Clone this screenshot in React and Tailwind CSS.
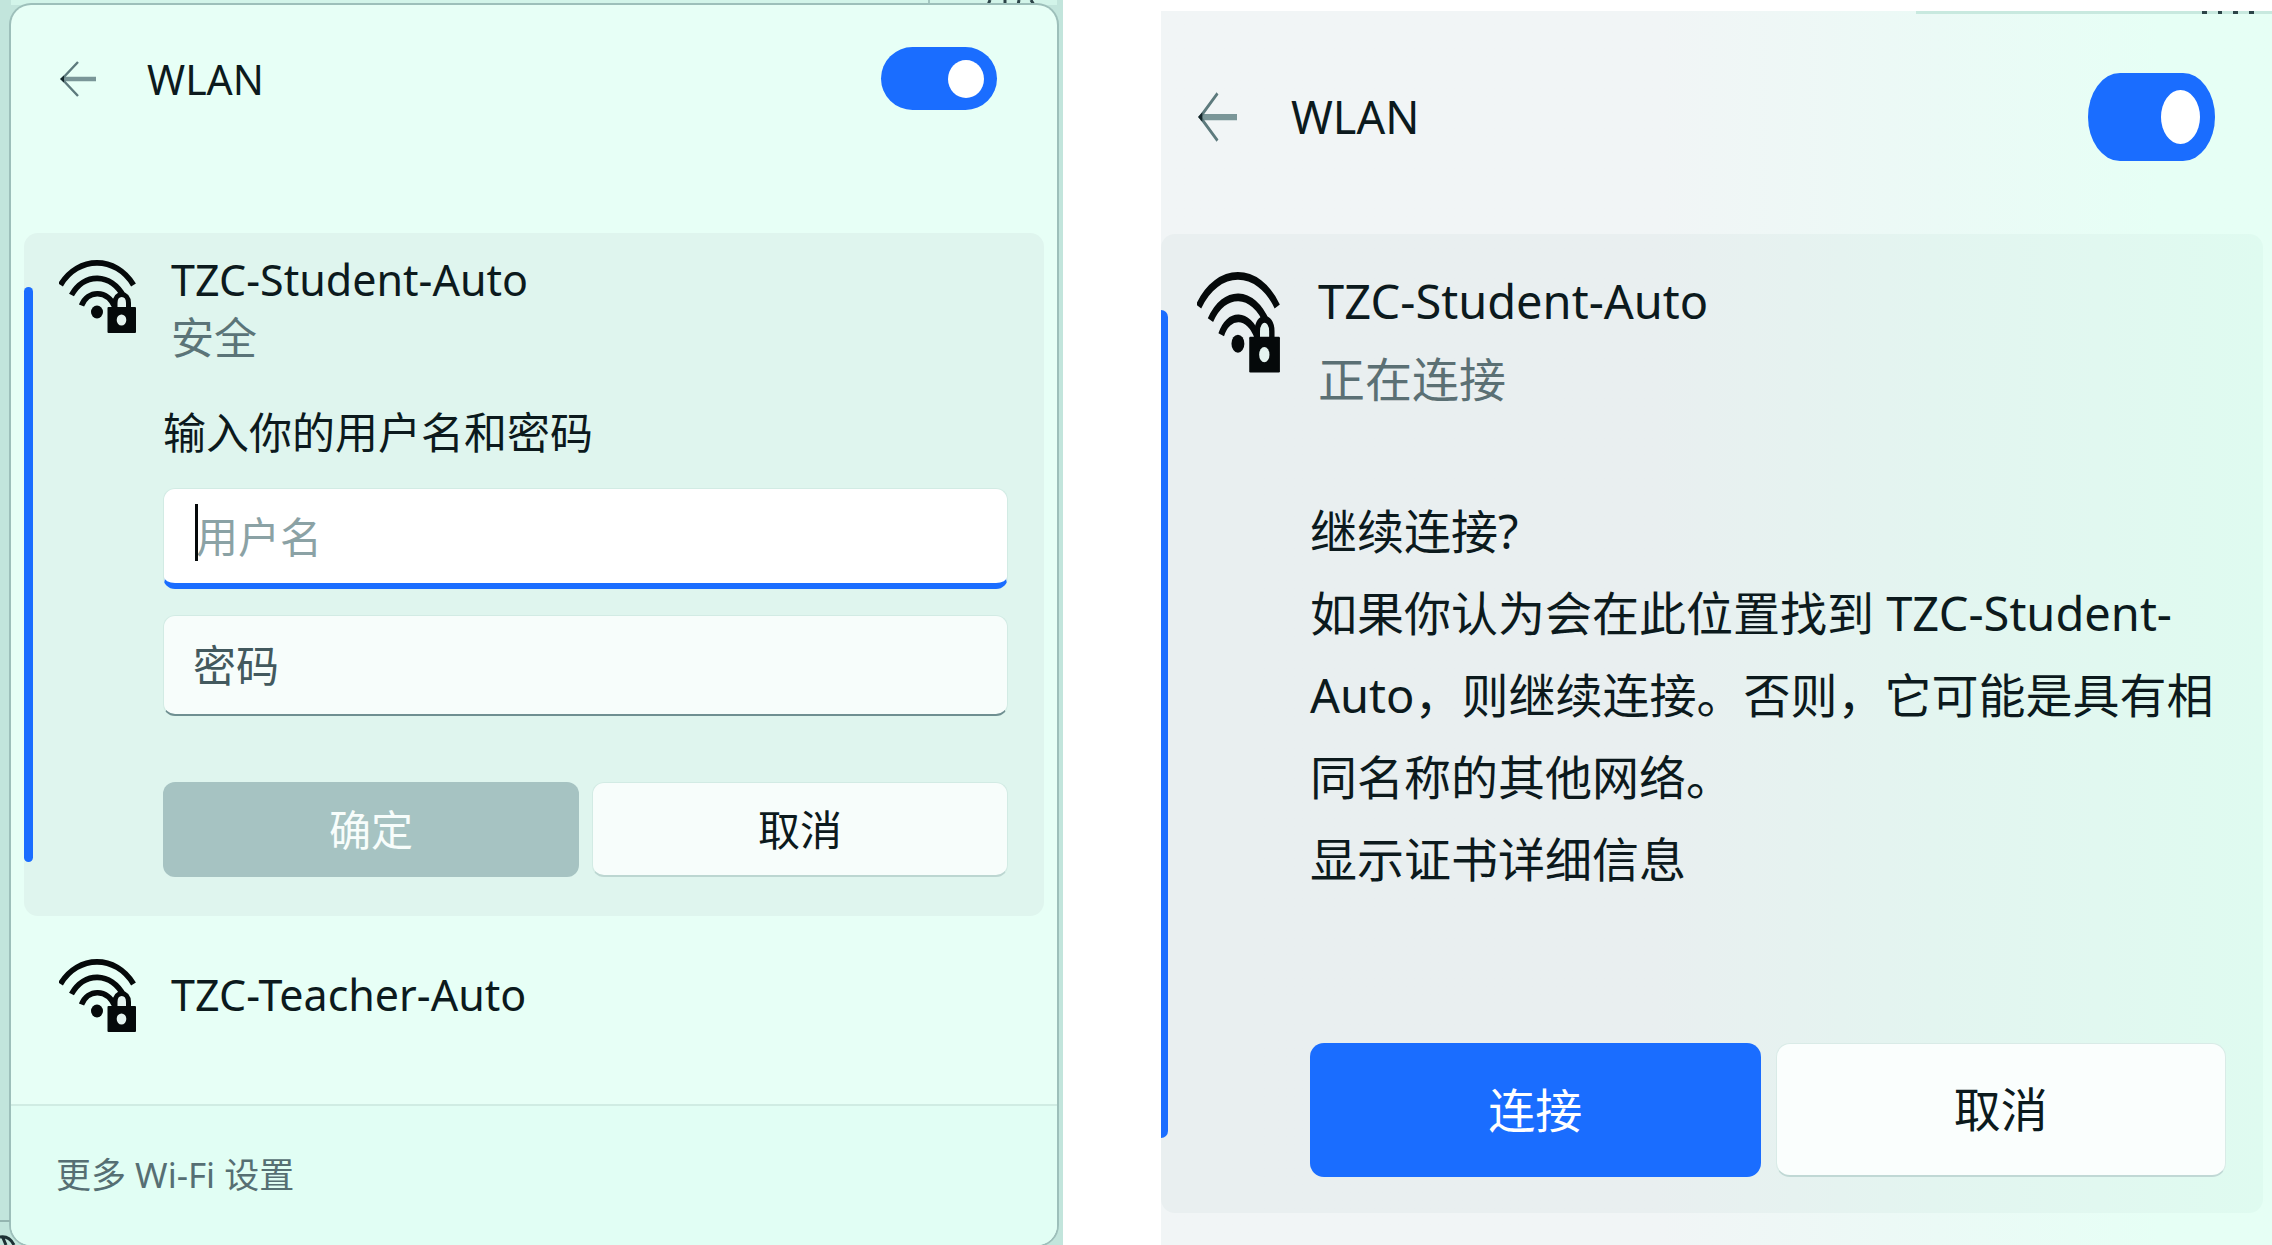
import React, { useState } from 'react';

/**
 * Back arrow shown at the left of each panel header.
 */
function BackArrow({ className }) {
  return (
    <svg viewBox="0 0 36 36" preserveAspectRatio="none" fill="none" className={className} aria-hidden="true">
      <path d="M2 18H36" stroke="#7a9698" strokeWidth="4.5" />
      <path d="M18 1L2 18L18 35" stroke="#5d7a7d" strokeWidth="2.4" />
      <path d="M0 18L4 14.5V21.5Z" fill="#14262a" />
    </svg>
  );
}

/**
 * Wi-Fi signal with a padlock in the lower right corner.
 */
function SecureWifiIcon({ className }) {
  return (
    <svg viewBox="0 0 78 74" preserveAspectRatio="none" fill="none" className={className} aria-hidden="true">
      <path d="M1.5 25C19 -4.5 57 -4.5 74.5 25" stroke="#05090a" strokeWidth="5.6" />
      <path d="M12.5 35C25 12.5 52 12.5 65 37" stroke="#05090a" strokeWidth="5.6" />
      <path d="M22.5 45.5C29 29.5 48 29.5 56 47" stroke="#05090a" strokeWidth="5.6" />
      <ellipse cx="38" cy="52" rx="6" ry="6.5" fill="#05090a" />
      <path d="M56 49V43C56 31.5 69.5 31.5 69.5 43V49" fill="#e4f3ef" stroke="#05090a" strokeWidth="5" />
      <rect x="48.5" y="47" width="28.5" height="26" rx="1" fill="#05090a" />
      <ellipse cx="62.5" cy="60" rx="4.8" ry="5.5" fill="#e4f3ef" />
    </svg>
  );
}

function Toggle({ label, checked, onChange, className, knobClass }) {
  return (
    <label className={`flex shrink-0 cursor-pointer items-center bg-[#1a6dff] ${checked ? 'justify-end' : 'justify-start'} ${className}`}>
      <input type="checkbox" role="switch" aria-label={label} checked={checked} onChange={onChange} className="sr-only" />
      <span className={`rounded-[50%] bg-white ${knobClass}`} />
    </label>
  );
}

function LoginPanel() {
  const [enabled, setEnabled] = useState(true);
  const [username, setUsername] = useState('');
  const [password, setPassword] = useState('');

  return (
    <section className="relative flex flex-col bg-[#c2e5dc] pr-[6px] pl-[11px]">
      {/* Lower edge of the window behind the panel */}
      <div className="flex h-[5px] justify-end bg-[#d2f4e9] pr-[20px]">
        <svg viewBox="0 0 112 5" className="h-[5px] w-[112px]" aria-hidden="true">
          <path d="M4 0V5" stroke="#a4c6c0" strokeWidth="2" />
          <path d="M65 0L63 5M80 0V4M93 5L94 0M106 0L109 5" stroke="#2c4448" strokeWidth="3" />
        </svg>
      </div>

      <div className="relative flex grow flex-col overflow-hidden rounded-[20px] bg-[#e7fff6] shadow-[0_0_0_2px_#9dbfba]">
        <header className="flex items-center pt-[42px] pr-[60px] pb-[123px] pl-[49px]">
          <button type="button" aria-label="返回">
            <BackArrow className="h-[36px] w-[36px]" />
          </button>
          <h1 className="ml-[51px] grow text-[41px] leading-[62px] text-[#0c1a1d]">WLAN</h1>
          <Toggle
            label="WLAN"
            checked={enabled}
            onChange={(e) => setEnabled(e.target.checked)}
            className="h-[63px] w-[116px] rounded-[32px] px-[13px]"
            knobClass="h-[38px] w-[36px]"
          />
        </header>

        <div className="relative mx-[13px] rounded-[14px] bg-[#dff5ee] pb-[39px]">
          <span className="absolute top-[54px] bottom-[54px] left-0 w-[9px] rounded-full bg-[#1a6dff]" />
          <div className="flex items-start pt-[18px] pl-[35px]">
            <SecureWifiIcon className="mt-[9px] h-[74px] w-[78px]" />
            <div className="ml-[34px]">
              <h2 className="text-[43px] leading-[58px] text-[#0c1a1d]">TZC-Student-Auto</h2>
              <p className="text-[43px] leading-[58px] text-[#5b7478]">安全</p>
            </div>
          </div>

          <form onSubmit={(e) => e.preventDefault()} className="mt-[36px] pr-[36px] pl-[139px]">
            <p className="text-[43px] leading-[60px] text-[#0c1a1d]">输入你的用户名和密码</p>
            <div className="relative mt-[25px]">
              <input
                type="text"
                aria-label="用户名"
                placeholder="用户名"
                value={username}
                onChange={(e) => setUsername(e.target.value)}
                className="h-[101px] w-full rounded-[12px] border border-b-[6px] border-[#d2ebe4] border-b-[#1a6dff] bg-white pl-[32px] text-[42px] text-[#0c1a1d] outline-none placeholder:text-[#8ba2a5]"
              />
              <span className="absolute top-[16px] left-[32px] h-[57px] w-[3px] bg-[#05090a]" />
            </div>
            <input
              type="password"
              aria-label="密码"
              placeholder="密码"
              value={password}
              onChange={(e) => setPassword(e.target.value)}
              className="mt-[26px] block h-[101px] w-full rounded-[12px] border border-b-2 border-[#d2ebe4] border-b-[#6f8f91] bg-[#f7fdfb] pl-[29px] text-[43px] text-[#0c1a1d] outline-none placeholder:text-[#43595e]"
            />
            <div className="mt-[66px] grid grid-cols-2 gap-[13px]">
              <button type="submit" disabled className="h-[95px] rounded-[12px] bg-[#a6c3c2] text-[42px] text-[#f7fdfb]">
                确定
              </button>
              <button type="button" className="h-[95px] rounded-[12px] border border-b-2 border-[#d2ebe4] border-b-[#bcd6d1] bg-[#f7fdfb] text-[42px] text-[#0c1a1d]">
                取消
              </button>
            </div>
          </form>
        </div>

        <button type="button" className="flex items-start pt-[43px] pb-[71px] pl-[48px] text-left">
          <SecureWifiIcon className="h-[74px] w-[78px]" />
          <span className="mt-[7px] ml-[34px] text-[43px] leading-[58px] text-[#0c1a1d]">TZC-Teacher-Auto</span>
        </button>

        <footer className="grow border-t-2 border-[#d0ece3] bg-[#e1fef4] pt-[45px] pl-[45px]">
          <a href="#wifi-settings" className="text-[35px] leading-[48px] text-[#566f73]">更多 Wi-Fi 设置</a>
        </footer>
      </div>

      <svg viewBox="0 0 16 26" className="absolute bottom-0 left-0 h-[26px] w-[16px]" aria-hidden="true">
        <path d="M0 2H10" stroke="#94b5b0" strokeWidth="2" />
        <path d="M0 18C6 17 11 20 14 26M3 19L6 26" stroke="#1d3034" strokeWidth="3" fill="none" />
      </svg>
    </section>
  );
}

function ConnectPanel() {
  const [enabled, setEnabled] = useState(true);

  return (
    <section className="mt-[11px] flex flex-col bg-linear-to-r from-[#f1f5f6] from-45% via-[#ebfaf6] via-70% to-[#e6fff5] to-90%">
      <div className="ml-auto flex h-[3px] w-[32%] justify-end bg-[#c8e9df] pr-[16px]">
        <svg viewBox="0 0 54 3" className="h-[3px] w-[54px]" aria-hidden="true">
          <path d="M0 1.5H5M16 1.5H20M31 1.5H36M47 1.5H52" stroke="#2c4448" strokeWidth="3" />
        </svg>
      </div>
      <header className="flex items-center pt-[59px] pr-[57px] pb-[73px] pl-[37px]">
        <button type="button" aria-label="返回">
          <BackArrow className="h-[50px] w-[39px]" />
        </button>
        <h1 className="ml-[54px] grow text-[45px] leading-[62px] text-[#0c1a1d]">WLAN</h1>
        <Toggle
          label="WLAN"
          checked={enabled}
          onChange={(e) => setEnabled(e.target.checked)}
          className="h-[88px] w-[127px] rounded-[32px_/_44px] px-[15px]"
          knobClass="h-[54px] w-[39px]"
        />
      </header>

      <div className="relative mr-[9px] mb-[32px] grow rounded-[14px] bg-linear-to-r from-[#e9eff0] from-45% via-[#e3f5f0] via-70% to-[#dffbf0] pb-[35px]">
        <span className="absolute top-[76px] bottom-[75px] left-0 w-[7px] rounded-r-full bg-[#1a6dff]" />
        <div className="flex items-start pt-[28px] pl-[36px]">
          <SecureWifiIcon className="mt-[10px] h-[102px] w-[84px]" />
          <div className="ml-[37px]">
            <h2 className="text-[47px] leading-[78px] text-[#0c1a1d]">TZC-Student-Auto</h2>
            <p className="text-[47px] leading-[78px] text-[#5b7074]">正在连接</p>
          </div>
        </div>

        <div className="mt-[72px] pl-[149px] text-[47px] leading-[82px] text-[#0c1a1d]">
          <p>继续连接?</p>
          <p>
            如果你认为会在此位置找到 TZC-Student-
            <br />
            Auto，则继续连接。否则，它可能是具有相
            <br />
            同名称的其他网络。
          </p>
          <a href="#certificate">显示证书详细信息</a>
        </div>

        <div className="mt-[143px] grid grid-cols-2 gap-[15px] pr-[37px] pl-[149px]">
          <button type="button" className="h-[134px] rounded-[14px] bg-[#1a6dff] text-[47px] text-white">
            连接
          </button>
          <button type="button" className="h-[134px] rounded-[14px] border border-b-2 border-[#d9ebe7] border-b-[#c0d8d5] bg-[#fafefd] text-[47px] text-[#0c1a1d]">
            取消
          </button>
        </div>
      </div>
    </section>
  );
}

export default function App() {
  return (
    <main className="grid min-h-screen grid-cols-[1063fr_1111fr] gap-[98px] bg-white font-['Noto_Sans','Noto_Sans_CJK_SC',sans-serif]">
      <LoginPanel />
      <ConnectPanel />
    </main>
  );
}
